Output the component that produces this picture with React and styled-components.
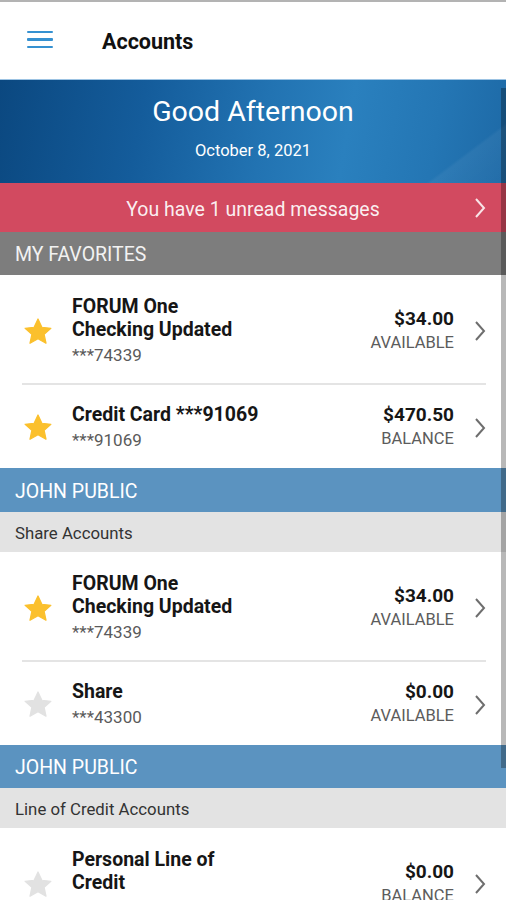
import React from "react";
import styled, { createGlobalStyle } from "styled-components";

const Global = createGlobalStyle`
  html, body { margin: 0; padding: 0; background: #fff; }
  body { font-family: Roboto, "Noto Sans", "Liberation Sans", sans-serif; -webkit-font-smoothing: antialiased; }
  * { box-sizing: border-box; }
`;

const Screen = styled.div`
  position: relative;
  width: 506px;
  height: 900px;
  overflow: hidden;
  background: #fff;
  border-top: 2px solid #b3b3b3;
`;

const TopBar = styled.header`
  height: 78px;
  display: flex;
  align-items: center;
  padding-left: 27px;
  gap: 49px;
  border-bottom: 1px solid #9cc3e3;
`;

const Burger = styled.div`
  width: 26px;
  display: flex;
  flex-direction: column;
  gap: 5px;
  margin-top: -2px;
  span {
    display: block;
    height: 2.5px;
    background: #3591d1;
    border-radius: 1px;
  }
`;

const Title = styled.h1`
  margin: 2px 0 0;
  font-size: 21.5px;
  font-weight: 700;
  color: #111;
  line-height: 26px;
`;

const Banner = styled.section`
  height: 103px;
  background:
    linear-gradient(143deg, rgba(255,255,255,0) 87.5%, rgba(255,255,255,0.05) 88.3%, rgba(255,255,255,0.025) 100%),
    linear-gradient(100deg, #0b4880 0%, #145c9b 28%, #2273b2 52%, #2a80be 68%, #2476b4 85%, #1d69a6 100%);
  color: #fff;
  display: flex;
  flex-direction: column;
  align-items: center;
  padding-top: 14px;
`;

const Greeting = styled.div`
  font-size: 28.5px;
  line-height: 36px;
  font-weight: 400;
`;

const DateText = styled.div`
  margin-top: 11px;
  font-size: 16.5px;
  font-weight: 400;
  line-height: 20px;
`;

const Alert = styled.div`
  height: 49px;
  background: #d24a60;
  color: rgba(255,255,255,0.92);
  display: flex;
  align-items: center;
  justify-content: center;
  position: relative;
  font-size: 19.5px;
  padding-top: 3px;
  svg {
    position: absolute;
    right: 20px;
    top: 14px;
  }
`;

const GroupHeader = styled.div`
  height: ${p => p.$h}px;
  background: ${p => p.$bg};
  color: ${p => p.$color};
  font-size: ${p => p.$size}px;
  display: flex;
  align-items: center;
  padding: 2px 0 0 15px;
`;

const List = styled.div`
  padding: 0 20px 0 22px;
`;

const Row = styled.div`
  display: flex;
  align-items: center;
  padding: ${p => (p.$first ? "20px 0 16px" : "18px 0 16px")};
  border-top: ${p => (p.$first ? "none" : "2px solid #e4e4e4")};
`;

const StarBox = styled.div`
  width: 32px;
  flex: none;
  display: flex;
  justify-content: center;
  margin-right: 18px;
`;

const Info = styled.div`
  flex: 1;
  min-width: 0;
`;

const Name = styled.div`
  font-size: 19.5px;
  font-weight: 700;
  line-height: 23px;
  color: #161616;
  max-width: 175px;
  white-space: ${p => (p.$nowrap ? "nowrap" : "normal")};
`;

const Num = styled.div`
  font-size: 17px;
  line-height: 24px;
  margin-top: 2px;
  color: #5a5a5a;
`;

const Amounts = styled.div`
  text-align: right;
  margin-right: 20px;
`;

const Amount = styled.div`
  font-size: 19px;
  font-weight: 700;
  line-height: 23px;
  color: #161616;
`;

const Kind = styled.div`
  font-size: 16.5px;
  line-height: 26px;
  color: #5c5c5c;
`;

const Scrollbar = styled.div`
  position: absolute;
  right: 0;
  top: 86px;
  width: 5px;
  height: 680px;
  background: rgba(0,0,0,0.28);
`;

const Star = ({ on }) => (
  <svg width="30" height="29" viewBox="0 0 24 23">
    <path
      d="M12 1.5l3.1 6.6 7.2.8-5.4 4.9 1.5 7.1L12 17.3l-6.4 3.6 1.5-7.1L1.7 8.9l7.2-.8z"
      fill={on ? "#fbc02d" : "#e2e2e2"}
      stroke={on ? "#fbc02d" : "#e2e2e2"}
      strokeWidth="1"
      strokeLinejoin="round"
    />
  </svg>
);

const Chevron = ({ color = "#6e6e6e" }) => (
  <svg width="12" height="22" viewBox="0 0 12 22">
    <path d="M2 2l8 9-8 9" fill="none" stroke={color} strokeWidth="2" />
  </svg>
);

const Account = ({ first, fav, name, num, amount, kind, nowrap }) => (
  <Row $first={first}>
    <StarBox><Star on={fav} /></StarBox>
    <Info>
      <Name $nowrap={nowrap}>{name}</Name>
      <Num>{num}</Num>
    </Info>
    <Amounts>
      <Amount>{amount}</Amount>
      <Kind>{kind}</Kind>
    </Amounts>
    <Chevron />
  </Row>
);

export default function App() {
  return (
    <Screen>
      <Global />
      <TopBar>
        <Burger><span /><span /><span /></Burger>
        <Title>Accounts</Title>
      </TopBar>
      <Banner>
        <Greeting>Good Afternoon</Greeting>
        <DateText>October 8, 2021</DateText>
      </Banner>
      <Alert>
        You have 1 unread messages
        <Chevron color="rgba(255,255,255,0.85)" />
      </Alert>
      <GroupHeader $h={43} $bg="#7d7d7d" $color="#f2f2f2" $size={19.5}>MY FAVORITES</GroupHeader>
      <List>
        <Account first fav name="FORUM One Checking Updated" num="***74339" amount="$34.00" kind="AVAILABLE" />
        <Account fav nowrap name="Credit Card ***91069" num="***91069" amount="$470.50" kind="BALANCE" />
      </List>
      <GroupHeader $h={44} $bg="#5b93c0" $color="#fff" $size={19.5}>JOHN PUBLIC</GroupHeader>
      <GroupHeader $h={40} $bg="#e3e3e3" $color="#333" $size={16.8}>Share Accounts</GroupHeader>
      <List>
        <Account first fav name="FORUM One Checking Updated" num="***74339" amount="$34.00" kind="AVAILABLE" />
        <Account name="Share" num="***43300" amount="$0.00" kind="AVAILABLE" />
      </List>
      <GroupHeader $h={43} $bg="#5b93c0" $color="#fff" $size={19.5}>JOHN PUBLIC</GroupHeader>
      <GroupHeader $h={40} $bg="#e3e3e3" $color="#333" $size={16.8}>Line of Credit Accounts</GroupHeader>
      <List>
        <Account first name="Personal Line of Credit" num="***10001" amount="$0.00" kind="BALANCE" />
      </List>
      <Scrollbar />
    </Screen>
  );
}
